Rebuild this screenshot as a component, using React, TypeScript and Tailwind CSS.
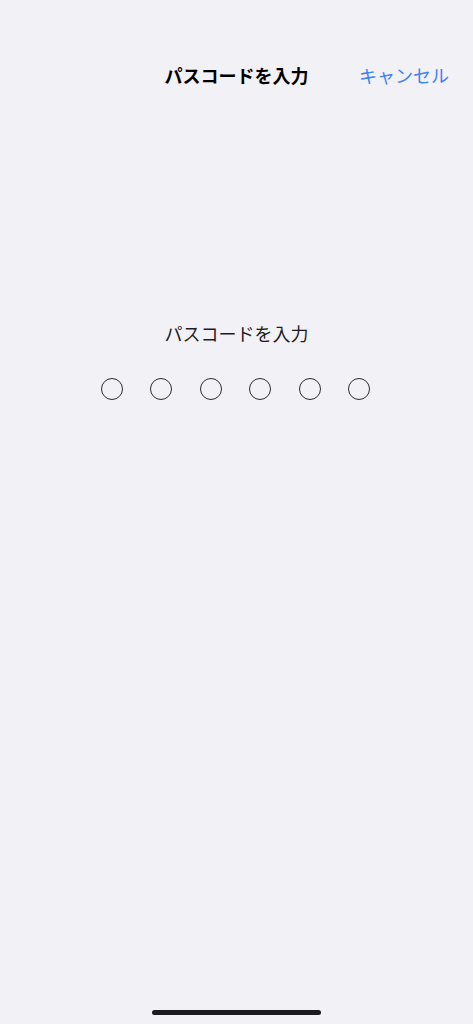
export default function App() {
  const font = { fontFamily: '"Noto Sans CJK JP", "Noto Sans", sans-serif' };
  return (
    <div className="w-[473px] h-[1024px] bg-[#f2f1f6] flex flex-col relative overflow-hidden" style={font}>
      <div className="h-[62px]" />
      <div className="h-[26px] relative flex items-center justify-center">
        <span className="text-[18px] leading-[26px] font-bold text-black">パスコードを入力</span>
        <span className="absolute right-[24px] top-0 text-[18px] leading-[26px] text-[#3d82f6]">キャンセル</span>
      </div>
      <div className="h-[232px]" />
      <div className="flex flex-col items-center">
        <span className="text-[18px] leading-[26px] text-[#1c1c1e]">パスコードを入力</span>
        <div className="mt-[32px] mr-[2px] flex gap-[27.4px]">
          {[0, 1, 2, 3, 4, 5].map((i) => (
            <div key={i} className="w-[22px] h-[22px] rounded-full border-[1.6px] border-[#2c2c2e]" />
          ))}
        </div>
      </div>
      <div className="flex-1" />
      <div className="flex justify-center pb-[9px]">
        <div className="w-[169px] h-[5px] rounded-full bg-[#1c1c1e]" />
      </div>
    </div>
  );
}
